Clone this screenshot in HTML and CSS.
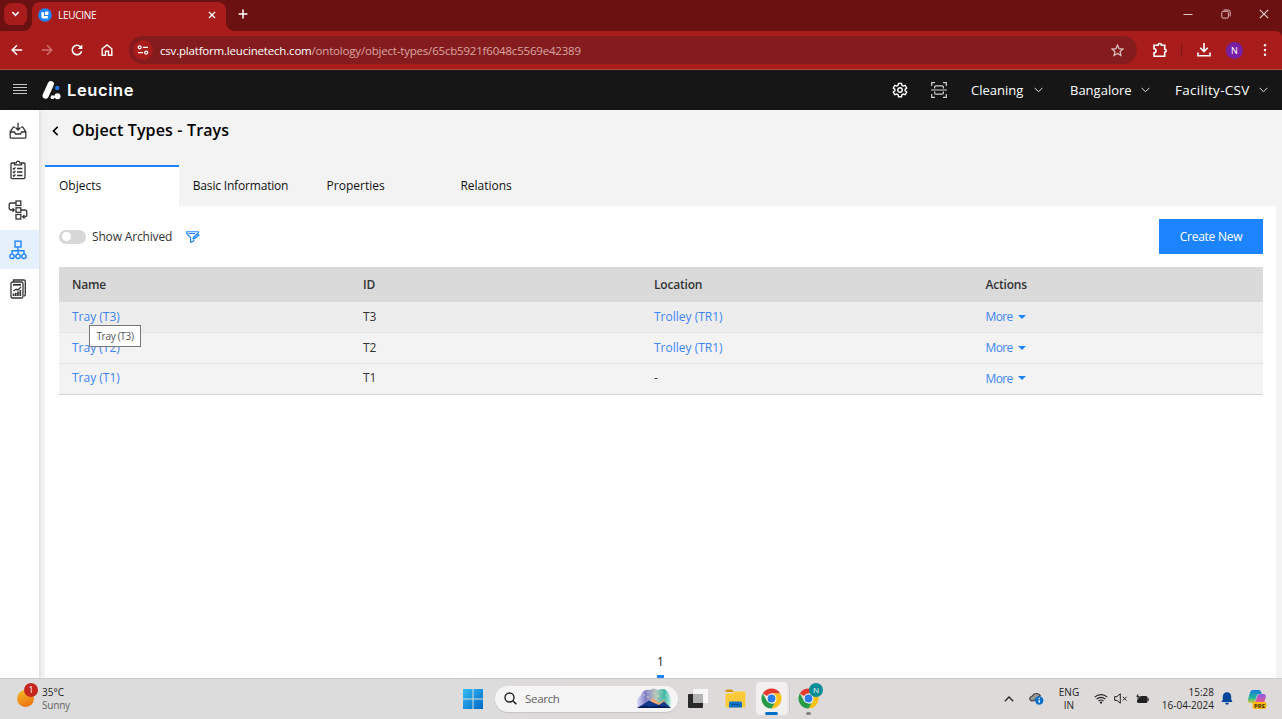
FILE: index.html
```html
<!DOCTYPE html>
<html lang="en">
<head>
  <meta charset="UTF-8">
  <title>LEUCINE</title>
  <link rel="stylesheet" href="styles.css">
</head>
<body>
  <div class="tabstrip">
    <button class="tab-search"><svg width="9" height="6" viewBox="0 0 9 6"><path d="M1.3 1l3.2 3.3L7.7 1" fill="none" stroke="#fff" stroke-width="1.6"/></svg></button>
    <div class="browser-tab">
      <svg class="favicon" width="14" height="14" viewBox="0 0 14 14"><circle cx="7" cy="7" r="6.8" fill="#1d84ff"/><path d="M3.4 4.2v4.5q0 1.8 1.8 1.8h4.6V8H6V4.2z" fill="#fff"/><rect x="7" y="3.5" width="3.4" height="3.4" rx=".6" fill="#fff"/></svg>
      <span class="browser-tab-title">LEUCINE</span>
      <svg class="tab-close" width="8" height="8" viewBox="0 0 8 8"><path d="M1 1l6 6M7 1L1 7" stroke="#fff" stroke-width="1.4"/></svg>
    </div>
    <svg class="new-tab" width="10" height="10" viewBox="0 0 10 10"><path d="M5 .6v8.8M.6 5h8.8" stroke="#fff" stroke-width="1.5"/></svg>
    <div class="window-buttons">
      <svg width="10" height="10" viewBox="0 0 10 10"><path d="M.5 5.5h9" stroke="#e3c8c8" stroke-width="1"/></svg>
      <svg width="10" height="10" viewBox="0 0 10 10"><rect x=".8" y="2.3" width="6.6" height="6.8" rx="1.2" fill="none" stroke="#dcb9b9"/><path d="M2.6 1h4.6q2 0 2 2v4.4" fill="none" stroke="#dcb9b9"/></svg>
      <svg width="10" height="10" viewBox="0 0 10 10"><path d="M.8.8l8.4 8.4M9.2.8L.8 9.2" stroke="#ead5d5" stroke-width="1.1"/></svg>
    </div>
  </div>

  <div class="toolbar">
    <svg width="12" height="12" viewBox="0 0 12 12"><path d="M11.2 6H1.5M6 1.2L1.2 6 6 10.8" fill="none" stroke="#fff" stroke-width="1.5"/></svg>
    <svg width="12" height="12" viewBox="0 0 12 12"><path d="M.8 6h9.7M6 1.2L10.8 6 6 10.8" fill="none" stroke="#d17272" stroke-width="1.4"/></svg>
    <svg width="12" height="12" viewBox="0 0 12 12"><path d="M10.6 7.2A4.7 4.7 0 1 1 9.4 2.7L10.4 3.8" fill="none" stroke="#fff" stroke-width="1.5"/><path d="M11.3.6v4.5H6.8z" fill="#fff"/></svg>
    <svg width="12" height="12" viewBox="0 0 12 12"><path d="M1.2 4.8L6 1l4.8 3.8v6.4H7.5V7.3h-3v3.9H1.2z" fill="none" stroke="#fff" stroke-width="1.4"/></svg>
    <div class="address">
      <span class="site-info"><svg width="12" height="10" viewBox="0 0 12 10"><g fill="none" stroke="#fff" stroke-width="1.3"><circle cx="2.7" cy="2.3" r="1.5"/><path d="M6 2.3h5M1 7.6h5"/><circle cx="9.2" cy="7.6" r="1.5"/></g></svg></span>
      <span class="url"><b>csv.platform.leucinetech.com</b>/ontology/object-types/65cb5921f6048c5569e42389</span>
      <svg class="star" width="13" height="13" viewBox="0 0 13 13"><path d="M6.5 1.2l1.6 3.5 3.8.4-2.8 2.5.8 3.9-3.4-2-3.4 2 .8-3.9L1.1 5.1l3.8-.4z" fill="none" stroke="#dcc0c0" stroke-width="1.3"/></svg>
    </div>
    <svg class="extension" width="16" height="16" viewBox="0 0 16 16"><path d="M2 3.2h4.1a1.7 1.7 0 0 1 3.4 0h3.2v4a1.5 1.5 0 0 1 0 3v4H2v-3.5a2 2 0 0 0 0-4z" fill="none" stroke="#fff" stroke-width="1.6"/></svg>
    <span class="toolbar-divider"></span>
    <svg class="download" width="14" height="14" viewBox="0 0 14 14"><path d="M7 0v8M3.3 4.8L7 8.5l3.7-3.7M1 9.4v3.4h12V9.4" fill="none" stroke="#fff" stroke-width="1.6"/></svg>
    <span class="profile">N</span>
    <svg class="kebab" width="4" height="14" viewBox="0 0 4 14" fill="#fff"><circle cx="2" cy="2.2" r="1.2"/><circle cx="2" cy="7" r="1.2"/><circle cx="2" cy="11.8" r="1.2"/></svg>
  </div>

  <div class="app-header">
    <svg class="menu-icon" width="14" height="12" viewBox="0 0 14 12"><path d="M0 1.5h14M0 4.5h14M0 7.5h14M0 10.500h14" stroke="#c6c6c6" stroke-width="1.2"/></svg>
    <svg class="logo" width="19" height="20" viewBox="0 0 19 20"><path d="M8.800 4.200L3.700 15.600" stroke="#fff" stroke-width="6.200" stroke-linecap="round"/><circle cx="15.2" cy="8" r="2.2" fill="#2374f5"/><path d="M10 17.200l5-1" stroke="#fff" stroke-width="2"/><circle cx="10.500" cy="17.200" r="1.900" fill="#fff"/><circle cx="15.500" cy="16.200" r="3" fill="#fff"/></svg>
    <span class="brand">Leucine</span>
    <svg class="gear" width="16" height="16" viewBox="0 0 24 24" fill="none" stroke="#fff" stroke-width="2.1"><circle cx="12" cy="12" r="3.4"/><path d="M9.8 2h4.400l.7 3 1.900 1.100 3-1 2.200 3.900-2.300 2.100v2l2.300 2.100-2.200 3.800-3-.9-1.900 1.100-.7 2.900H9.800l-.7-2.900L7.200 18l-3 .9L2 15.200l2.300-2.100v-2L2 9l2.200-3.900 3 1L9.100 5z"/></svg>
    <svg class="scan" width="16" height="16" viewBox="0 0 16 16" fill="none" stroke="#d0d0d0" stroke-width="1.2"><path d="M.7 4V.7H4M12 .7h3.300V4M15.300 12v3.300H12M4 15.300H.7V12M0 8h16"/><path d="M3.600 6.400V5q0-1.200 1.200-1.200h6.400q1.200 0 1.200 1.200v1.400M3.600 9.600V11q0 1.200 1.200 1.200h6.400q1.200 0 1.200-1.200V9.600"/></svg>
    <div class="picker picker-usecase"><span>Cleaning</span><svg width="9" height="6" viewBox="0 0 9 6"><path d="M.6.8l3.900 4L8.400.8" fill="none" stroke="#ddd"/></svg></div>
    <div class="picker picker-city"><span>Bangalore</span><svg width="9" height="6" viewBox="0 0 9 6"><path d="M.6.8l3.900 4L8.400.8" fill="none" stroke="#ddd"/></svg></div>
    <div class="picker picker-facility"><span>Facility-CSV</span><svg width="9" height="6" viewBox="0 0 9 6"><path d="M.6.8l3.900 4L8.400.8" fill="none" stroke="#ddd"/></svg></div>
  </div>

  <div class="layout">
    <div class="sidebar">
      <a class="side-item"><svg width="18" height="18" viewBox="0 0 18 18" fill="none" stroke="#333" stroke-width="1.3"><path d="M6 5.200H4.200L1.200 9.800v5.400q0 1 1 1h13.600q1 0 1-1V9.800l-3-4.600H12M1.200 10h4.300l1 2h5l1-2h4.300M9 .8v7M6.500 5.500L9 8l2.500-2.500"/></svg></a>
      <a class="side-item"><svg width="18" height="20" viewBox="0 0 18 20" fill="none" stroke="#333" stroke-width="1.3"><path d="M5.500 3H3q-1 0-1 1v13.600q0 1 1 1h12q1 0 1-1V4q0-1-1-1h-2.500M5.500 4.800V2.800H7.300a1.700 1.700 0 0 1 3.400 0h1.800v2zM8 8.500h5.500M8 12h5.500M8 15.500h5.500M4 8.300l.9.900 1.500-1.800M4 11.800l.9.900 1.500-1.800M4 15.300l.9.900 1.500-1.800"/></svg></a>
      <a class="side-item"><svg width="20" height="20" viewBox="0 0 20 20" fill="none" stroke="#333" stroke-width="1.3"><rect x="8" y="1" width="4.800" height="4.500"/><rect x="8" y="7.800" width="4.800" height="4.500"/><rect x="8" y="14.500" width="4.800" height="4.500"/><path d="M8 3H3Q1.200 3 1.200 5v3q0 2 2 2h3M4.500 8.200l1.800 1.800-1.800 1.800M12.800 10h4q2 0 2 2v2.800q0 2-2 2h-2M16.500 15l-1.800 1.800 1.800 1.800"/></svg></a>
      <a class="side-item active"><svg width="18" height="20" viewBox="0 0 18 20" fill="none" stroke="#1d84ff" stroke-width="1.4"><rect x="6" y="1.200" width="6" height="5.800"/><path d="M9 7v7M3 14v-3.300h12V14"/><circle cx="3" cy="16.300" r="2.200"/><circle cx="9" cy="16.300" r="2.200"/><circle cx="15" cy="16.300" r="2.200"/></svg></a>
      <a class="side-item"><svg width="16" height="20" viewBox="0 0 16 20" fill="none" stroke="#333" stroke-width="1.3"><path d="M3.500 2.800V1h10.300q1.500 0 1.500 1.500v13q0 1.300-1.300 1.500"/><rect x="1" y="3" width="12" height="16" rx="1.500"/><path d="M3 5.800h8" stroke-width="1.800"/><path d="M3.600 17v-2.500M5.800 17v-3.300M8 17v-4.500M10.300 17v-6" stroke-width="1.700"/><path d="M3.200 12l3-1.700 1.700.6L11 8"/></svg></a>
    </div>

    <div class="content">
      <div class="page-title">
        <svg width="7" height="10" viewBox="0 0 7 10"><path d="M5.700.9L1.500 5l4.200 4.100" fill="none" stroke="#000" stroke-width="1.600"/></svg>
        <h1>Object Types - Trays</h1>
      </div>

      <div class="tabs">
        <div class="tab selected">Objects</div>
        <div class="tab tab-basic">Basic Information</div>
        <div class="tab">Properties</div>
        <div class="tab">Relations</div>
      </div>

      <div class="panel">
        <div class="filters">
          <span class="switch"></span>
          <span class="switch-label">Show Archived</span>
          <svg class="filter-icon" width="14" height="12" viewBox="0 0 14 12" fill="none" stroke="#1d84ff" stroke-width="1.1"><path d="M12.500 2.200V.7H.7v1.800L4.600 6.500v5l3.200-1.700V8.600M2.500 2.500h6.500"/><path d="M7 7.600l.5-1.600 4-3.400 1.500 1.500-4 3.300z" fill="#8cc0ff"/></svg>
          <button class="create-btn">Create New</button>
        </div>

        <table>
          <colgroup><col class="col-name"><col class="col-id"><col class="col-location"><col></colgroup>
          <thead>
            <tr><th>Name</th><th>ID</th><th>Location</th><th>Actions</th></tr>
          </thead>
          <tbody>
            <tr class="hovered">
              <td><div class="name-cell"><a>Tray (T3)</a><span class="tooltip">Tray (T3)</span></div></td>
              <td>T3</td><td><a>Trolley (TR1)</a></td><td><a class="more">More</a></td>
            </tr>
            <tr><td><a>Tray (T2)</a></td><td>T2</td><td><a>Trolley (TR1)</a></td><td><a class="more">More</a></td></tr>
            <tr><td><a>Tray (T1)</a></td><td>T1</td><td>-</td><td><a class="more">More</a></td></tr>
          </tbody>
        </table>

        <div class="pagination"><span class="page">1</span></div>
      </div>
    </div>
  </div>

  <div class="taskbar">
    <div class="weather">
      <span class="sun"><span class="badge">1</span></span>
      <div class="weather-text"><span>35°C</span><span class="muted">Sunny</span></div>
    </div>

    <div class="dock">
      <svg class="windows" width="20" height="20" viewBox="0 0 20 20"><defs><linearGradient id="win" x2="1" y2="1"><stop stop-color="#35bdf2"/><stop offset="1" stop-color="#0067c8"/></linearGradient></defs><path d="M0 0h9.500v9.500H0zM10.500 0H20v9.500h-9.500zM0 10.500h9.500V20H0zM10.500 10.500H20V20h-9.500z" fill="url(#win)"/></svg>
      <div class="search">
        <svg width="13" height="13" viewBox="0 0 13 13"><circle cx="5.500" cy="5.500" r="4.500" fill="none" stroke="#222" stroke-width="1.400"/><path d="M8.800 8.800l3.500 3.500" stroke="#222" stroke-width="1.600"/></svg>
        <span>Search</span>
        <svg class="search-art" width="36" height="21" viewBox="0 0 36 21"><defs><linearGradient id="sky"><stop stop-color="#dcdcf8"/><stop offset=".25" stop-color="#8280c6"/><stop offset=".55" stop-color="#b9c8bd"/><stop offset=".8" stop-color="#38b8a8"/><stop offset="1" stop-color="#d3f3ec"/></linearGradient></defs><path d="M2 19Q-1 12 5 7q2-6 9-5 4-3 8 0 8-3 11 4 4 6 1 13z" fill="url(#sky)"/><path d="M12 15l5-5 6 5 5-3 3 4v2H10z" fill="#f0a878"/><path d="M1 20l5-3 7-4.500 5 2.500 5 2 5-3.500 7 6.500z" fill="#123a8c"/><path d="M1 20q8-4 13-1 9-3 21 1z" fill="#061d5c"/><g fill="#fff3b5"><circle cx="8" cy="7" r=".6"/><circle cx="12" cy="4" r=".6"/><circle cx="12" cy="9" r=".7"/><circle cx="18" cy="5" r=".6"/><circle cx="22" cy="8" r=".7"/><circle cx="26" cy="4" r=".6"/><circle cx="30" cy="7" r=".6"/><circle cx="28" cy="11" r=".6"/></g></svg>
      </div>
      <svg class="task-view" width="20" height="20" viewBox="0 0 20 20"><rect y="5" width="15" height="14" rx="1" fill="#292929"/><rect x="5" y="0" width="15" height="14" rx="1" fill="#fff" opacity=".75"/><path d="M5 5h10v9H5z" fill="#aaa" opacity=".7"/></svg>
      <svg class="explorer" width="21" height="19" viewBox="0 0 21 19"><path d="M.5 2q0-1.500 1.500-1.500h5L9 3H.5z" fill="#d89408"/><path d="M.5 4.500h7L9.500 2.500h10q1 0 1 1V17q0 1.500-1.500 1.500H2Q.5 18.500.5 17z" fill="#ffca3a"/><path d="M4 18.500V14q0-1.500 1.500-1.500h10Q17 12.500 17 14v4.500z" fill="#0b72c5"/><path d="M6.500 15.500h8" stroke="#075096" stroke-width="1.200"/></svg>
      <div class="dock-app dock-active">
        <svg width="21" height="21" viewBox="0 0 48 48"><path d="M24 24L4.100 12.500A23 23 0 0 1 43.900 12.500H24z" fill="#e33b2e"/><path d="M24 24V12.500h19.900A23 23 0 0 1 24 47l10-17.200z" fill="#fbc116"/><path d="M4.100 12.500L14 29.800 24 35.500h6.700L24 47A23 23 0 0 1 4.100 12.500z" fill="#289b48"/><circle cx="24" cy="24" r="11.500" fill="#fff"/><circle cx="24" cy="24" r="9" fill="#2b7de9"/></svg>
        <span class="indicator"></span>
      </div>
      <div class="dock-app dock-second">
        <svg width="21" height="21" viewBox="0 0 48 48"><path d="M24 24L4.100 12.500A23 23 0 0 1 43.900 12.500H24z" fill="#e33b2e"/><path d="M24 24V12.500h19.900A23 23 0 0 1 24 47l10-17.200z" fill="#fbc116"/><path d="M4.100 12.500L14 29.800 24 35.500h6.700L24 47A23 23 0 0 1 4.100 12.500z" fill="#289b48"/><circle cx="24" cy="24" r="11.500" fill="#fff"/><circle cx="24" cy="24" r="9" fill="#2b7de9"/></svg>
        <span class="dock-badge">N</span>
        <span class="indicator small"></span>
      </div>
    </div>

    <div class="tray">
      <svg class="tray-up" width="10" height="6" viewBox="0 0 10 6"><path d="M.8 5.200L5 1l4.200 4.200" fill="none" stroke="#222" stroke-width="1.300"/></svg>
      <svg class="cloud" width="15" height="13" viewBox="0 0 15 13"><path d="M4 9Q.8 9 .8 6.800.8 4.500 3.500 4 4.500 1.500 7.300 1.500q3 0 4 2.300L4 9" fill="#999" stroke="#444" stroke-width="1.200"/><circle cx="10.200" cy="8.500" r="4.200" fill="#0870c7"/><path d="M10.200 7.800v3M10.200 5.800V7" stroke="#fff" stroke-width="1.200"/></svg>
      <div class="lang"><span>ENG</span><span>IN</span></div>
      <svg class="wifi" width="14" height="11" viewBox="0 0 14 11" fill="none" stroke="#222" stroke-width="1.100"><path d="M.7 4.200a9 9 0 0 1 12.600 0M2.600 6.200a6.200 6.200 0 0 1 8.800 0M4.500 8.100a3.500 3.500 0 0 1 5 0"/><circle cx="7" cy="9.600" r=".6" fill="#222"/></svg>
      <svg class="mute" width="14" height="11" viewBox="0 0 14 11" fill="none" stroke="#222"><path d="M.7 3.600h2.200L6.300.8v9.400L2.900 7.400H.7zM8.800 3.800l3.700 3.700M12.500 3.800L8.800 7.500"/></svg>
      <svg class="battery" width="15" height="11" viewBox="0 0 15 11"><rect x="2" y="3" width="10.500" height="7" rx="1.500" fill="#222"/><path d="M13.200 5.200v2.600" stroke="#222" stroke-width="1.300"/><path d="M3.500 0L.6 4h2L1.800 7.200 5.500 2.900h-2z" fill="#222" stroke="#dcdada" stroke-width=".5"/></svg>
      <div class="clock"><span>15:28</span><span>16-04-2024</span></div>
      <svg class="bell" width="12" height="13" viewBox="0 0 12 13" fill="#05459b"><path d="M6 .3q4 .2 4.200 4.300v2.900l1.300 2.500H.5l1.300-2.500V4.600Q2 .5 6 .3zM4 10.800h4q-.4 1.900-2 1.900t-2-1.900z"/></svg>
      <svg class="copilot" width="20" height="20" viewBox="0 0 20 20"><defs><linearGradient id="cp1" x2="0" y2="1"><stop stop-color="#1479db"/><stop offset=".6" stop-color="#22b99a"/><stop offset="1" stop-color="#d7cd36"/></linearGradient><linearGradient id="cp2" x2="0" y2="1"><stop stop-color="#8c5be8"/><stop offset=".6" stop-color="#e0559d"/><stop offset="1" stop-color="#fa8b4c"/></linearGradient></defs><path d="M5.500 1h6.200q1.800 0 2.400 2l.6 2h-3q-1.300 0-1.800 1.600L8 12.500Q7.500 14 6 14H3Q.5 14 .9 11L3 3.500Q3.700 1 5.500 1z" fill="url(#cp1)"/><path d="M14.500 17H8.300q-1.500 0-2-2l-.3-1.500Q8 13.800 8.600 12l2-5.400Q11.200 5 13 5h3.500q2.800 0 2.300 3L17 14.500q-.7 2.500-2.500 2.500z" fill="url(#cp2)"/><rect x="5.500" y="13" width="14" height="7" rx="2" fill="#fcba0b"/><text class="pre" x="12.500" y="18.700" text-anchor="middle">PRE</text></svg>
    </div>
  </div>
</body>
</html>
```

FILE: styles.css
```css
* {
  box-sizing: border-box;
}

body {
  margin: 0;
  height: 719px;
  display: flex;
  flex-direction: column;
  overflow: hidden;
  font-family: "Open Sans", "Noto Sans", sans-serif;
  background: #fff;
}

svg {
  display: block;
  flex: none;
}

button {
  border: none;
  padding: 0;
  font-family: inherit;
}

/* browser */
.tabstrip {
  height: 31px;
  flex: none;
  display: flex;
  align-items: center;
  padding-left: 4px;
  background: #6c1111;
  color: #fff;
}

.tab-search {
  width: 23px;
  height: 23px;
  display: grid;
  place-items: center;
  border-radius: 8px;
  background: #a81c1c;
  margin-bottom: 3px;
}

.browser-tab {
  position: relative;
  width: 194px;
  height: 29px;
  margin: 2px 0 0 5px;
  padding: 0 10px 4px 6px;
  display: flex;
  align-items: center;
  border-radius: 8px 8px 0 0;
  background: #a81c1c;
}

.browser-tab::before,
.browser-tab::after {
  content: "";
  position: absolute;
  bottom: 0;
  width: 8px;
  height: 8px;
}

.browser-tab::before {
  left: -8px;
  background: radial-gradient(circle at 0 0, #6c1111 7.5px, #a81c1c 8px);
}

.browser-tab::after {
  right: -8px;
  background: radial-gradient(circle at 100% 0, #6c1111 7.5px, #a81c1c 8px);
}

.browser-tab-title {
  margin-left: 6px;
  font-size: 10px;
  letter-spacing: -0.3px;
}

.tab-close {
  margin-left: auto;
}

.new-tab {
  margin: 0 0 3px 12px;
}

.window-buttons {
  margin: 0 13px 3px auto;
  display: flex;
  gap: 28px;
}

.toolbar {
  height: 39px;
  flex: none;
  display: flex;
  align-items: center;
  padding-left: 11px;
  background: #a81c1c;
  border-bottom: 1px solid #b64a45;
  border-top-right-radius: 6px;
  box-shadow: 6px -6px 0 0 #6c1111;
}

.toolbar > svg + svg {
  margin-left: 18px;
}

.address {
  width: 1008px;
  height: 28px;
  margin-left: 16px;
  padding: 0 13px 0 4px;
  display: flex;
  align-items: center;
  border-radius: 14px;
  background: #841c1d;
}

.site-info {
  width: 20px;
  height: 20px;
  display: grid;
  place-items: center;
  border-radius: 50%;
  background: #a81c1c;
}

.url {
  margin-left: 7px;
  font-size: 11.5px;
  letter-spacing: -0.19px;
  color: #dba5a5;
}

.url b {
  font-weight: normal;
  color: #fff;
}

.star {
  margin-left: auto;
}

.extension {
  margin-left: 15px;
}

.toolbar-divider {
  width: 1px;
  height: 13px;
  margin: 0 15px 0 13px;
  background: #7d1717;
}

.profile {
  width: 17px;
  height: 17px;
  margin-left: 15px;
  border-radius: 50%;
  background: #7720a5;
  color: #fff;
  font-size: 9px;
  line-height: 17px;
  text-align: center;
}

.kebab {
  margin-left: 20px;
}

/* application header */
.app-header {
  height: 40px;
  flex: none;
  display: flex;
  align-items: center;
  padding-left: 13px;
  background: #161616;
  color: #fff;
}

.menu-icon {
  margin-bottom: 3px;
}

.logo {
  margin-left: 15px;
}

.brand {
  margin-left: 6px;
  font: 600 16.5px Inter, sans-serif;
  letter-spacing: 0.6px;
}

.gear {
  margin-left: auto;
}

.scan {
  margin: 0 24px 0 23px;
}

.picker {
  display: flex;
  align-items: center;
  justify-content: space-between;
  font-size: 13px;
  white-space: nowrap;
}

.picker-usecase {
  width: 72px;
  margin-right: 27px;
}

.picker-city {
  width: 80px;
  margin-right: 25px;
}

.picker-facility {
  width: 93px;
  margin-right: 14px;
  font-size: 13.5px;
  letter-spacing: 0.3px;
}

/* page */
.layout {
  flex: 1;
  min-height: 0;
  display: flex;
  background: #f3f3f3;
}

.sidebar {
  width: 39px;
  flex: none;
  padding-top: 1px;
  background: #fff;
  box-shadow: 1px 0 4px rgba(0,0,0,0.12);
}

.side-item {
  height: 39.6px;
  display: grid;
  place-items: center;
  padding-right: 3px;
}

.side-item.active {
  background: #e6f0fc;
}

.content {
  flex: 1;
  margin: 0 6px;
  display: flex;
  flex-direction: column;
}

.page-title {
  height: 55px;
  padding: 0 0 14px 7px;
  display: flex;
  align-items: center;
}

.page-title h1 {
  margin: 0 0 1px 13px;
  font-size: 16px;
  font-weight: 600;
  letter-spacing: 0.15px;
}

.tabs {
  height: 41px;
  flex: none;
  display: flex;
}

.tab {
  width: 133.8px;
  padding: 10px 13px 0 14px;
  border-top: 2px solid transparent;
  font-size: 12px;
  font-weight: 500;
  line-height: 18px;
  color: #111;
  white-space: nowrap;
}

.tab.selected {
  border-top-color: #1d84ff;
  background: #fff;
}

.tab-basic {
  letter-spacing: -0.18px;
}

.panel {
  flex: 1;
  padding: 13px 13px 0 14px;
  display: flex;
  flex-direction: column;
  background: #fff;
}

.filters {
  height: 35px;
  display: flex;
  align-items: center;
}

.switch {
  width: 27px;
  height: 14px;
  padding: 2.5px;
  border-radius: 7px;
  background: #d7d7d7;
}

.switch::before {
  content: "";
  display: block;
  width: 9px;
  height: 9px;
  border-radius: 50%;
  background: #fff;
}

.switch-label {
  width: 80px;
  margin: 0 14px 0 6px;
  font-size: 12px;
  letter-spacing: -0.16px;
  color: #333;
  white-space: nowrap;
}

.filter-icon {
  margin-top: 1px;
}

.create-btn {
  width: 104px;
  height: 35px;
  margin-left: auto;
  background: #1d84ff;
  color: #fff;
  font-size: 12px;
  letter-spacing: -0.25px;
}

table {
  width: 1204px;
  margin-top: 13px;
  border-collapse: separate;
  border-spacing: 0;
  table-layout: fixed;
  font-size: 12px;
  color: #333;
  border-bottom: 1px solid #d4d4d4;
}

.col-name,
.col-id {
  width: 291px;
}

.col-location {
  width: 331.5px;
}

th {
  height: 35px;
  padding: 0 13px;
  background: #dadada;
  font-weight: 600;
  letter-spacing: -0.2px;
  text-align: left;
}

td {
  height: 30.8px;
  padding: 0 13px 1px;
  background: #f3f3f3;
  border-bottom: 1px solid #e2e2e2;
}

tr:last-child td {
  border-bottom-color: #f3f3f3;
}

.hovered td {
  background: #ededed;
}

td a {
  color: #3d85f5;
}

td .more {
  display: flex;
  align-items: center;
  gap: 5px;
  padding-top: 1px;
  letter-spacing: -0.6px;
}

.more::after {
  content: "";
  border: 4px solid transparent;
  border-top-color: #1d84ff;
  border-bottom: none;
}

.name-cell {
  position: relative;
}

.tooltip {
  position: absolute;
  left: 17px;
  top: 17px;
  z-index: 1;
  width: 52px;
  height: 22px;
  border: 1px solid #777;
  background: #fff;
  color: #555;
  font-size: 10px;
  line-height: 20px;
  letter-spacing: -0.3px;
  text-align: center;
}

.pagination {
  margin-top: auto;
  display: flex;
  justify-content: center;
}

.page {
  width: 7px;
  height: 25px;
  margin-right: 1px;
  border-bottom: 3px solid #1d84ff;
  font-size: 12px;
  line-height: 18px;
  color: #222;
}

/* taskbar */
.taskbar {
  height: 41px;
  flex: none;
  display: flex;
  align-items: center;
  padding-bottom: 1px;
  border-top: 1px solid #cacaca;
  background: linear-gradient(90deg, #dcdcdc, #dcdcdc 32%, #dedada 48%, #dedada);
  font-family: "Open Sans", sans-serif;
  font-size: 10px;
  color: #222;
}

.weather {
  width: 463px;
  padding-left: 17px;
  display: flex;
}

.sun {
  position: relative;
  width: 17px;
  height: 17px;
  margin: 4px 8px 0 0;
  border-radius: 50%;
  background: linear-gradient(160deg, #f5bd28, #ed690d);
}

.badge {
  position: absolute;
  left: 7px;
  top: -7px;
  width: 14px;
  height: 14px;
  border-radius: 50%;
  background: #c4261d;
  color: #fff;
  font-size: 9px;
  line-height: 14px;
  text-align: center;
}

.weather-text,
.lang,
.clock {
  display: flex;
  flex-direction: column;
  line-height: 13px;
}

.muted {
  color: #666;
  letter-spacing: -0.2px;
}

.dock {
  display: flex;
  align-items: center;
}

.search {
  width: 183px;
  height: 26px;
  margin: 0 10px 0 12px;
  padding: 0 6px 0 9px;
  display: flex;
  align-items: center;
  border-radius: 13px;
  background: #f5f5f5;
  box-shadow: 0 1px 1px #c4c4c4;
  color: #606060;
  font-size: 11.5px;
  letter-spacing: -0.3px;
}

.search span {
  margin-left: 8px;
}

.search-art {
  margin-left: auto;
}

.explorer {
  margin-left: 17px;
}

.dock-app {
  position: relative;
  width: 31px;
  height: 33px;
  display: grid;
  place-items: center;
}

.dock-active {
  margin-left: 10px;
  border-radius: 4px;
  background: #f1efef;
  box-shadow: 2px 0 0 #e7e5e5, 3px 0 0 #cfcccc;
}

.dock-second {
  margin-left: 6px;
}

.indicator {
  position: absolute;
  left: 9px;
  bottom: 0;
  width: 13px;
  height: 3px;
  border-radius: 2px;
  background: #0870c7;
}

.indicator.small {
  left: 13px;
  width: 5px;
  background: #858585;
}

.dock-badge {
  position: absolute;
  right: 1px;
  top: 1px;
  width: 14px;
  height: 14px;
  border-radius: 50%;
  background: #078d98;
  color: #fff;
  font-size: 8px;
  line-height: 14px;
  text-align: center;
}

.tray {
  margin-left: auto;
  padding-right: 15px;
  display: flex;
  align-items: center;
}

.cloud {
  margin-left: 15px;
}

.lang {
  width: 22px;
  margin: 0 14px 0 14px;
  align-items: center;
}

.mute {
  margin-left: 6px;
}

.battery {
  margin-left: 7px;
}

.clock {
  width: 53px;
  margin: 0 7px 0 11px;
  align-items: flex-end;
  white-space: nowrap;
}

.copilot {
  margin-left: 14px;
}

.pre {
  font: bold 6px "Open Sans", sans-serif;
  fill: #3c2b00;
}
```
